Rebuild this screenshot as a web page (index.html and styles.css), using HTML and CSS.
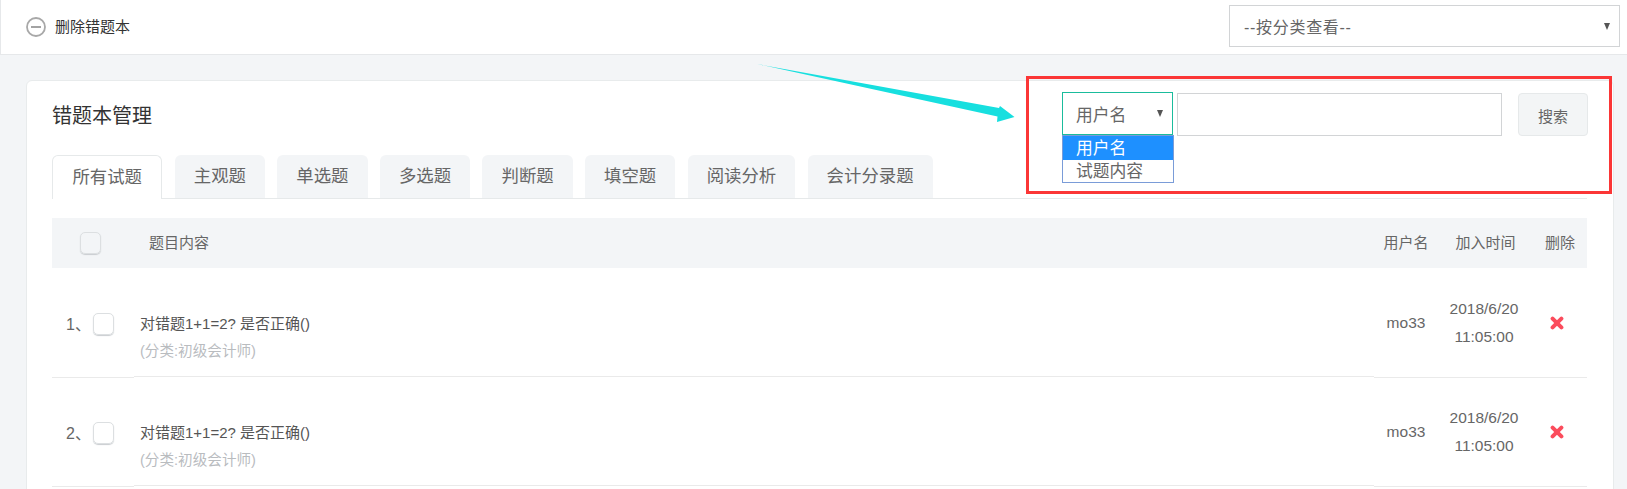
FILE: index.html
```html
<!DOCTYPE html>
<html lang="zh">
<head>
<meta charset="utf-8">
<title>错题本管理</title>
<link rel="stylesheet" href="styles.css">
</head>
<body>
<header class="topbar">
  <a class="remove-book">
    <svg class="minus-icon" viewBox="0 0 20 20" width="20" height="20"><circle cx="10" cy="10" r="9" fill="none" stroke="#a8a8a8" stroke-width="1.800"/><path d="M5 10h10" stroke="#999" stroke-width="1.800"/></svg>
    <span>删除错题本</span>
  </a>
  <div class="select select-category"><span class="cat-label">--按分类查看--</span><i class="caret"></i></div>
</header>
<main class="content">
  <section class="card">
    <div class="title-row">
      <h1>错题本管理</h1>
      <div class="search">
        <div class="select-wrap">
          <div class="select select-field"><span>用户名</span><i class="caret"></i></div>
          <ul class="menu">
            <li class="active">用户名</li>
            <li>试题内容</li>
          </ul>
        </div>
        <div class="input"></div>
        <button class="btn">搜索</button>
      </div>
    </div>
    <nav class="tabs">
      <a class="tab current">所有试题</a>
      <a class="tab">主观题</a>
      <a class="tab">单选题</a>
      <a class="tab">多选题</a>
      <a class="tab">判断题</a>
      <a class="tab">填空题</a>
      <a class="tab">阅读分析</a>
      <a class="tab">会计分录题</a>
    </nav>
    <div class="thead">
      <div class="head-check"><i class="check"></i></div>
      <div class="head-text">题目内容</div>
      <div class="head-text center">用户名</div>
      <div class="head-text center">加入时间</div>
      <div class="head-text center">删除</div>
    </div>
    <div class="row">
      <div class="idx"><span class="num">1、</span><i class="check"></i></div>
      <div class="main-cell"><p class="q">对错题1+1=2? 是否正确()</p><p class="cat">(分类:初级会计师)</p></div>
      <div class="tail">
        <div class="cell-user">mo33</div>
        <div class="cell-time">2018/6/20<br>11:05:00</div>
        <div class="cell-del"><svg class="x" viewBox="0 0 14 14" width="14" height="14"><path d="M2.6 2.6l8.8 8.8M11.4 2.6l-8.8 8.8" stroke="#fb4c5c" stroke-width="4" stroke-linecap="round"/></svg></div>
      </div>
    </div>
    <div class="row">
      <div class="idx"><span class="num">2、</span><i class="check"></i></div>
      <div class="main-cell"><p class="q">对错题1+1=2? 是否正确()</p><p class="cat">(分类:初级会计师)</p></div>
      <div class="tail">
        <div class="cell-user">mo33</div>
        <div class="cell-time">2018/6/20<br>11:05:00</div>
        <div class="cell-del"><svg class="x" viewBox="0 0 14 14" width="14" height="14"><path d="M2.6 2.6l8.8 8.8M11.4 2.6l-8.8 8.8" stroke="#fb4c5c" stroke-width="4" stroke-linecap="round"/></svg></div>
      </div>
    </div>
  </section>
</main>
<div class="red-box"></div>
<svg class="arrow" viewBox="0 0 270 70" width="270" height="70"><polygon points="7,4 249,48 250,46 264.5,57 247,62 247.500,56.500" fill="#17dfdf"/></svg>
</body>
</html>
```

FILE: styles.css
```css
* { box-sizing: border-box; }
html, body { margin: 0; height: 489px; overflow: hidden; }
body {
  position: relative;
  background: #f3f5f7;
  color: #666;
  font-family: "Liberation Sans", "Noto Sans CJK SC", sans-serif;
  font-size: 15px;
}
p, h1, ul { margin: 0; padding: 0; }
ul { list-style: none; }

.topbar {
  height: 55px;
  background: #fff;
  border-bottom: 1px solid #e6e8ea;
  border-left: 1px solid #e6e8ea;
  padding: 5px 7px 0 25px;
  display: flex;
  justify-content: space-between;
  align-items: flex-start;
}
.remove-book { display: flex; align-items: center; gap: 9px; height: 44px; color: #333; font-size: 15px; }
.remove-book span { margin-bottom: 4px; }
.minus-icon { display: block; margin-bottom: 1px; }

.select {
  background: #fff;
  display: flex;
  align-items: center;
  justify-content: space-between;
  color: #666;
}
.select-category {
  width: 391px;
  height: 42px;
  border: 1px solid #d2d4d6;
  padding: 0 9px 0 14px;
  font-size: 16px;
}
.cat-label { letter-spacing: .7px; }
.caret {
  display: block;
  width: 0;
  height: 0;
  border-left: 3.500px solid transparent;
  border-right: 3.500px solid transparent;
  border-top: 7px solid #555;
}

.content { padding: 25px 13px 0 26px; }
.card {
  height: 420px;
  background: #fff;
  border: 1px solid #e8ebec;
  border-radius: 6px 6px 0 0;
  padding: 0 26px 0 25px;
}
.title-row {
  height: 74px;
  display: flex;
  justify-content: space-between;
  align-items: flex-start;
}
h1 { font-size: 20px; font-weight: 400; color: #333; line-height: 28px; margin-top: 21px; }
.search { display: flex; align-items: flex-start; margin: 11px -1px 0 0; }
.select-wrap { position: relative; width: 111px; }
.select-field {
  height: 43px;
  border: 1px solid #1abc9c;
  padding: 0 9px 0 13px;
  font-size: 16.800px;
}
.menu {
  position: absolute;
  top: 43px;
  left: 0;
  width: 112px;
  height: 48px;
  background: #fff;
  border: 1px solid #7a9cd8;
  font-size: 16.800px;
  color: #666;
}
.menu li { height: 23px; line-height: 23px; padding-left: 13px; }
.menu .active { height: 24px; line-height: 26px; background: #1e90ff; color: #fff; }
.input {
  width: 325px;
  height: 43px;
  margin: 1px 0 0 4px;
  background: #fff;
  border: 1.500px solid #d2d4d6;
}
.btn {
  width: 70px;
  height: 43px;
  margin: 1px 0 0 16px;
  padding: 2px 0 0;
  background: #f3f5f6;
  border: 1px solid #e6e9ea;
  border-radius: 4px;
  color: #666;
  font: inherit;
}

.tabs {
  display: flex;
  align-items: flex-start;
  height: 44px;
  border-bottom: 1px solid #e6e9ea;
}
.tab {
  height: 43px;
  line-height: 43px;
  padding: 0 19px;
  margin-right: 12.400px;
  background: #f3f5f7;
  border-radius: 6px 6px 0 0;
  font-size: 17.400px;
  color: #666;
}
.current {
  height: 44px;
  padding: 0 19.400px;
  background: #fff;
  border: 1px solid #e6e9ea;
  border-bottom: 0;
}

.thead {
  display: grid;
  grid-template-columns: 97px 1227px 60px 99px 50px;
  height: 50px;
  margin-top: 19px;
  background: #f3f5f7;
  align-items: center;
}
.head-check { padding-left: 28px; display: flex; }
.head-text { white-space: nowrap; margin-bottom: 4px; }
.center { text-align: center; }
.check {
  display: block;
  width: 21px;
  height: 22px;
  background: transparent;
  border: 1px solid #dcdfe1;
  border-radius: 5px;
  box-shadow: 0 1px 1px #c9cdd0;
}
.row { display: grid; grid-template-columns: 82px 1240px 213px; grid-template-rows: 109px; align-items: start; }
.idx {
  height: 110px;
  border-bottom: 1px solid #eaeaea;
  display: flex;
  align-items: flex-start;
  padding: 45px 0 0 14px;
}
.num { width: 27px; margin-top: -2px; font-size: 16px; color: #666; white-space: nowrap; }
.main-cell {
  height: 109px;
  border-bottom: 1px solid #eaeaea;
  padding: 45px 0 0 6px;
  font-size: 15px;
}
.q { color: #555; line-height: 22px; }
.cat { color: #b9bcbf; line-height: 22px; margin-top: 5px; font-size: 14.600px; }
.tail {
  height: 110px;
  border-bottom: 1px solid #eaeaea;
  display: grid;
  grid-template-columns: 64px 92px 57px;
  align-items: center;
  font-size: 15.500px;
}
.cell-user, .cell-time { text-align: center; white-space: nowrap; }
.cell-time { line-height: 28px; margin-top: 1px; }
.cell-del { padding-left: 20px; }
.x { display: block; }

.red-box {
  position: absolute;
  left: 1026px;
  top: 76px;
  width: 586px;
  height: 118px;
  border: 3px solid #fb3636;
  pointer-events: none;
}
.arrow { position: absolute; left: 750px; top: 60px; pointer-events: none; }
```
